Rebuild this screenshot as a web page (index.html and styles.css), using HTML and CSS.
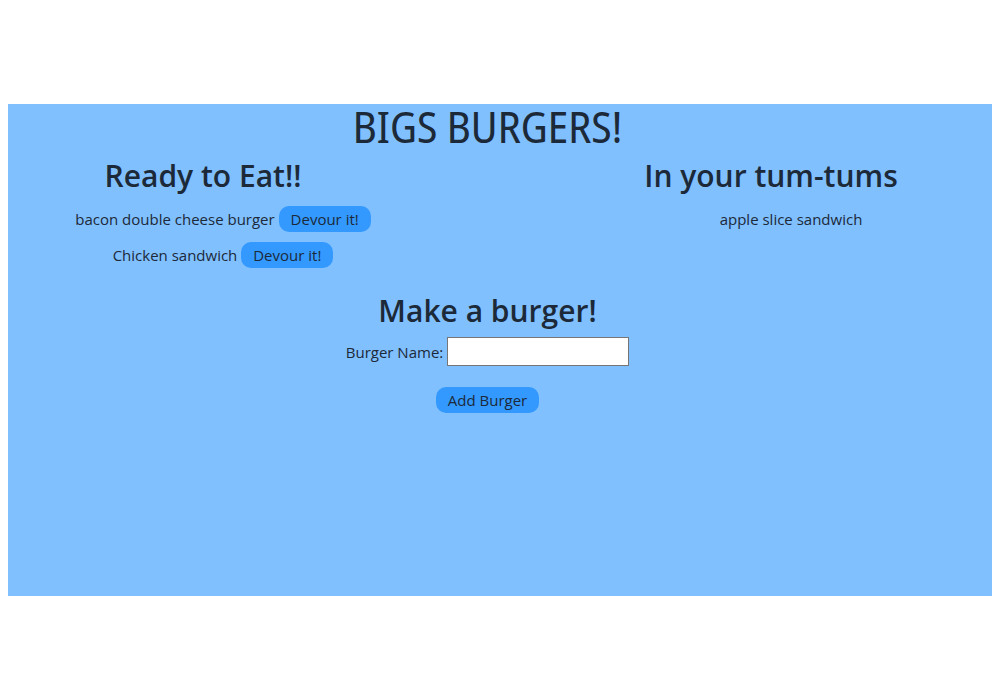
FILE: index.html
```html
<!DOCTYPE html>
<html lang="en">
<head>
<meta charset="utf-8">
<title>Bigs Burgers</title>
<link rel="stylesheet" href="styles.css">
</head>
<body>
<div class="page">
  <h1 class="title">BIGS BURGERS!</h1>
  <div class="row">
    <section class="col col-left">
      <h2 class="heading">Ready to Eat!!</h2>
      <ul class="list">
        <li class="item">bacon double cheese burger <button class="btn">Devour it!</button></li>
        <li class="item">Chicken sandwich <button class="btn">Devour it!</button></li>
      </ul>
    </section>
    <section class="col col-right">
      <h2 class="heading">In your tum-tums</h2>
      <ul class="list">
        <li class="item eaten">apple slice sandwich</li>
      </ul>
    </section>
  </div>
  <form class="maker">
    <h2 class="heading">Make a burger!</h2>
    <div class="field">
      <label class="label" for="bn">Burger Name:</label>
      <input class="input" id="bn" type="text">
    </div>
    <button class="btn btn-add" type="button">Add Burger</button>
  </form>
</div>
</body>
</html>
```
FILE: styles.css
```css
html, body {
  margin: 0;
  padding: 0;
  background: #ffffff;
}
body {
  padding: 104px 8px 0 8px;
  font-family: "Open Sans", "Noto Sans", sans-serif;
  color: #1c2938;
}
.page {
  background: #80c0ff;
  height: 492px;
  box-sizing: border-box;
  padding-right: 25px;
}
.title {
  margin: 0;
  text-align: center;
  font-family: "Noto Sans Display", "Roboto Condensed", sans-serif;
  font-stretch: condensed;
  font-weight: 400;
  font-size: 43px;
  line-height: 44px;
  padding-top: 1px;
  color: #1c2938;
}
.row {
  display: flex;
  justify-content: space-between;
}
.col {
  text-align: center;
}
.col-left { width: 390px; }
.col-right { width: 392px; }
.heading {
  margin: 0;
  font-weight: 600;
  font-size: 30px;
  line-height: 40px;
}
.row .heading { margin-top: 7px; margin-bottom: 10px; }
.list {
  list-style: none;
  margin: 0;
  padding: 0 0 0 40px;
}
.item {
  font-size: 15px;
  line-height: 26px;
  margin-bottom: 10px;
}
.btn {
  font-family: inherit;
  font-size: 15px;
  color: #1c2938;
  background: #3399ff;
  border: none;
  border-radius: 10px;
  height: 26px;
  padding: 0 12px;
  cursor: pointer;
}
.maker {
  text-align: center;
  margin-top: 13px;
}
.field {
  display: flex;
  justify-content: center;
  align-items: center;
  gap: 4px;
  margin-top: 6px;
  font-size: 15px;
}
.input {
  width: 176px;
  height: 25px;
  border: 1px solid #767676;
  padding: 1px 2px;
  font-size: 15px;
}
.btn-add {
  margin-top: 21px;
  font-size: 15px;
}
```
